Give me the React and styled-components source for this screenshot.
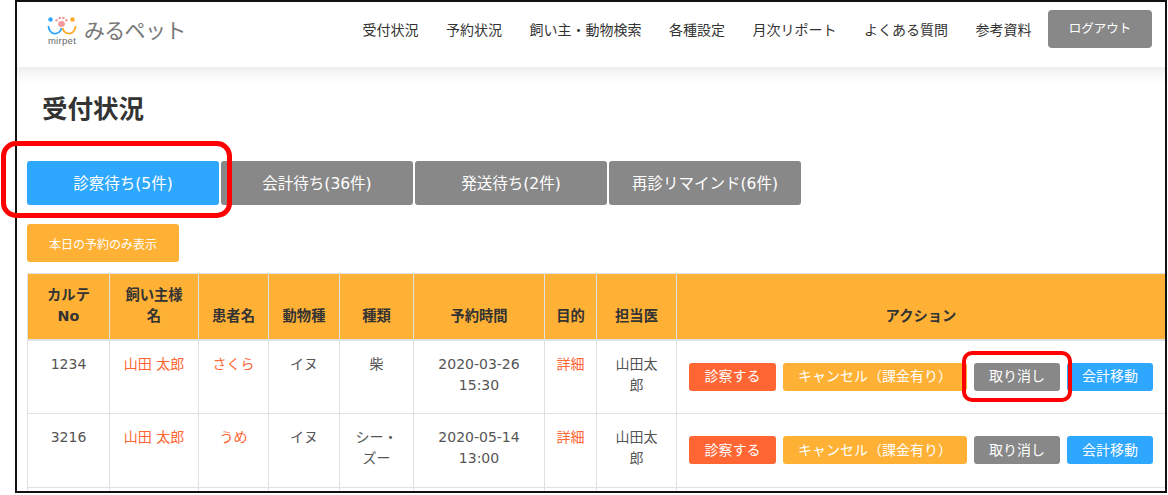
import React from "react";
import styled, { createGlobalStyle } from "styled-components";

const FONT = `"DejaVu Sans", "Noto Sans CJK JP", sans-serif`;

const Global = createGlobalStyle`
  html, body { margin: 0; padding: 0; background: #fff; }
  body { font-family: ${FONT}; color: #333; }
`;
const Frame = styled.div`
  position: relative; box-sizing: border-box; width: 1152px; height: 493px; margin-left: 15px;
  border: 2px solid #111; overflow: hidden; background: #fff;
`;
const Header = styled.header`
  height: 65px; display: flex; align-items: center; justify-content: space-between;
  padding: 0 13px 0 29px; background: #fff;
`;
const Brand = styled.div`display: flex; align-items: center; gap: 6px; margin-bottom: 7px;`;
const LogoMark = styled.div`display: flex; flex-direction: column; align-items: center; width: 32px;`;
const LogoText = styled.span`font: 9.5px/10px "Liberation Sans", sans-serif; color: #666; letter-spacing: .3px; margin-top: -1px;`;
const BrandName = styled.span`font-size: 21px; line-height: 30px; color: #777; letter-spacing: -.7px;`;
const Nav = styled.nav`display: flex; align-items: center; font-size: 14px; color: #333; margin-bottom: 11px;`;
const NavItem = styled.a`margin-right: 27.5px; white-space: nowrap;`;
const Logout = styled.button`
  width: 104px; height: 38px; margin-left: -11px; border: 0; border-radius: 4px; background: #888; color: #fff;
  font: 12.5px ${FONT}; padding: 0 0 3px;
`;
const Content = styled.main`
  padding: 0 0 0 10px;
  background: linear-gradient(#eeeeee 0, #fbfbfb 10px, #fff 18px);
`;
const Title = styled.h1`margin: 0; padding: 22px 0 0 15px; height: 73px; box-sizing: border-box; font-size: 25.5px; line-height: 40px; font-weight: 700; color: #333;`;
const Tabs = styled.div`display: flex; gap: 2px; margin-top: 21px;`;
const Tab = styled.button`
  width: 192px; height: 44px; border: 0; border-radius: 3px; padding: 0 0 3px; background: ${p => p.$active ? "#2ea7ff" : "#888"};
  color: #fff; font: 15.5px ${FONT};
`;
const Filter = styled.button`
  display: block; width: 152px; height: 38px; margin: 19px 0 11px; border: 0; border-radius: 3px; background: #ffb136;
  color: #fff; font: 12px ${FONT};
`;
const Table = styled.table`
  width: 1138px; table-layout: fixed; border-collapse: collapse; font-size: 14px;
`;
const Th = styled.th`
  box-sizing: border-box; background: #ffb136; border: 1px solid #dee2e6; border-bottom-width: 2px; height: 66px; padding: 0 4px 12px; vertical-align: bottom;
  font-size: 14.3px; line-height: 21px; color: #333; font-weight: 700; text-align: center;
`;
const Td = styled.td`
  border: 1px solid #dee2e6; height: 74px; padding: 13px 8px 0; vertical-align: top; text-align: center;
  line-height: 21px; color: #555; box-sizing: border-box;
`;
const Link = styled.a`color: #ff6633;`;
const Actions = styled.div`display: flex; gap: 7px; padding: 9px 0 0 4px; white-space: nowrap;`;
const Action = styled.button`
  height: 28px; padding: 0 0 3px; border: 0; border-radius: 3px; flex: none; width: ${p => p.$w}px; background: ${p => p.$c};
  color: #fff; font: 14px ${FONT};
`;
const Ring = styled.div`
  position: absolute; box-sizing: border-box; border: ${p => p.$b}px solid #f00; border-radius: ${p => p.$r}px;
  left: ${p => p.$x}px; top: ${p => p.$y}px; width: ${p => p.$w}px; height: ${p => p.$h}px; pointer-events: none; z-index: 3;
`;

const Logo = () => (
  <svg width="30" height="21" viewBox="0 0 30 21" aria-hidden="true">
    <circle cx="3.5" cy="3.5" r="2.2" fill="#2ea7ff" />
    <circle cx="25.5" cy="3.5" r="2.2" fill="#ffa726" />
    <path d="M1.5 10 a6.6 7.5 0 0 0 13 2" fill="none" stroke="#2ea7ff" strokeWidth="1.8" />
    <path d="M15.5 12 a6.6 7.5 0 0 0 13 -2" fill="none" stroke="#ffa726" strokeWidth="1.8" />
    <g fill="#f49a9a">
      <ellipse cx="14.5" cy="8" rx="3.4" ry="3" />
      <circle cx="9.6" cy="4.2" r="1.2" /><circle cx="12.8" cy="2" r="1.3" />
      <circle cx="16.4" cy="2" r="1.3" /><circle cx="19.4" cy="4.2" r="1.2" />
    </g>
  </svg>
);

const navItems = ["受付状況", "予約状況", "飼い主・動物検索", "各種設定", "月次リポート", "よくある質問", "参考資料"];
const tabs = ["診察待ち(5件)", "会計待ち(36件)", "発送待ち(2件)", "再診リマインド(6件)"];
const cols = [82, 89, 70, 71, 74, 131, 52, 80, 489];
const heads = [["カルテ", "No"], ["飼い主様", "名"], ["患者名"], ["動物種"], ["種類"], ["予約時間"], ["目的"], ["担当医"], ["アクション"]];
const rows = [
  { no: "1234", owner: "山田 太郎", pet: "さくら", kind: ["柴"], date: "2020-03-26", time: "15:30" },
  { no: "3216", owner: "山田 太郎", pet: "うめ", kind: ["シー・", "ズー"], date: "2020-05-14", time: "13:00" },
];
const Lines = ({ items }) => items.map((t, i) => <React.Fragment key={i}>{i > 0 && <br />}{t}</React.Fragment>);

export default function App() {
  return (
    <>
      <Global />
      <Frame>
        <Header>
          <Brand>
            <LogoMark><Logo /><LogoText>mirpet</LogoText></LogoMark>
            <BrandName>みるペット</BrandName>
          </Brand>
          <Nav>
            {navItems.map(n => <NavItem key={n}>{n}</NavItem>)}
            <Logout>ログアウト</Logout>
          </Nav>
        </Header>
        <Content>
          <Title>受付状況</Title>
          <Tabs>{tabs.map((t, i) => <Tab key={t} $active={i === 0}>{t}</Tab>)}</Tabs>
          <Filter>本日の予約のみ表示</Filter>
          <Table>
            <colgroup>{cols.map((w, i) => <col key={i} style={{ width: w }} />)}</colgroup>
            <thead><tr>{heads.map((h, i) => <Th key={i}><Lines items={h} /></Th>)}</tr></thead>
            <tbody>
              {rows.map(r => (
                <tr key={r.no}>
                  <Td>{r.no}</Td>
                  <Td><Link>{r.owner}</Link></Td>
                  <Td><Link>{r.pet}</Link></Td>
                  <Td>イヌ</Td>
                  <Td><Lines items={r.kind} /></Td>
                  <Td>{r.date}<br />{r.time}</Td>
                  <Td><Link>詳細</Link></Td>
                  <Td>山田太<br />郎</Td>
                  <Td>
                    <Actions>
                      <Action $w={87} $c="#ff6633">診察する</Action>
                      <Action $w={184} $c="#ffb136">キャンセル（課金有り）</Action>
                      <Action $w={86} $c="#888">取り消し</Action>
                      <Action $w={86} $c="#2ea7ff">会計移動</Action>
                    </Actions>
                  </Td>
                </tr>
              ))}
              <tr><Td /><Td /><Td /><Td /><Td /><Td /><Td /><Td /><Td /></tr>
            </tbody>
          </Table>
        </Content>
        <Ring $b={4} $x={945} $y={349} $w={110} $h={51} $r={10} />
      </Frame>
      <Ring $b={5} $x={1} $y={141} $w={231} $h={77} $r={15} />
    </>
  );
}
